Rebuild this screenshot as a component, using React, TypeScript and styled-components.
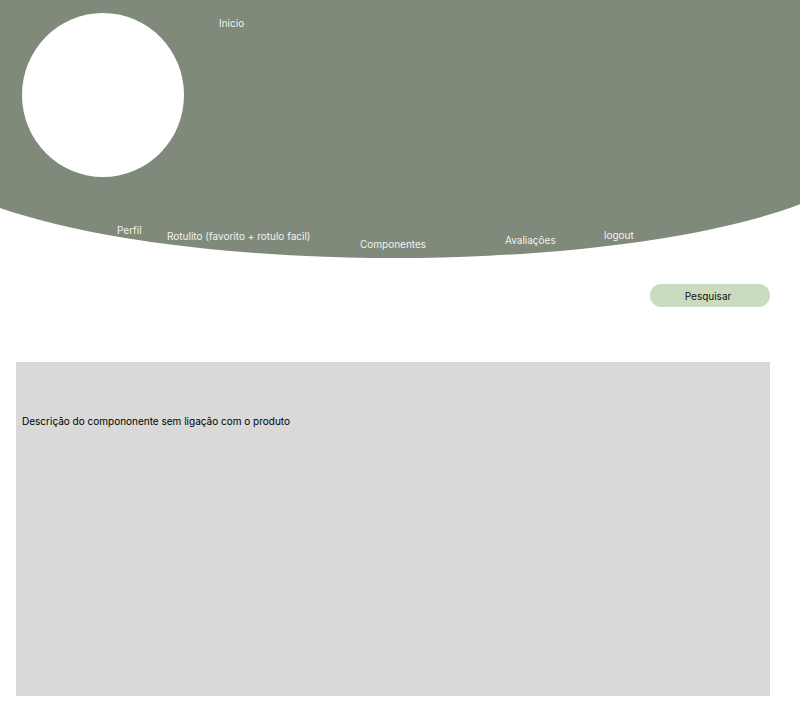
import React from "react";
import styled, { createGlobalStyle } from "styled-components";

const Global = createGlobalStyle`
  html, body {
    margin: 0;
    padding: 0;
    background: #ffffff;
    overflow-x: hidden;
  }
  body {
    font-family: Inter, "Noto Sans", "Liberation Sans", sans-serif;
  }
  * { box-sizing: border-box; }
`;

const Page = styled.div`
  width: 800px;
  min-height: 723px;
  overflow: hidden;
  display: flex;
  flex-direction: column;
`;

const Header = styled.header`
  width: 960px;
  height: 258px;
  margin-left: -85px;
  padding: 13px 0 0 107px;
  background: #7f8a7a;
  border-bottom-left-radius: 480px 116px;
  border-bottom-right-radius: 480px 116px;
  display: flex;
  flex-direction: column;
`;

const TopRow = styled.div`
  display: flex;
  align-items: flex-start;
  height: 164px;
`;

const Avatar = styled.div`
  width: 162px;
  height: 164px;
  border-radius: 50%;
  background: #ffffff;
  flex-shrink: 0;
`;

const NavText = styled.span<{ $dy?: number }>`
  display: block;
  font-size: 10px;
  line-height: 12px;
  color: #f2f2f0;
  white-space: nowrap;
  margin-top: ${(p) => p.$dy ?? 0}px;
`;

const HomeLink = styled(NavText)`
  margin-left: 35px;
`;

const NavRow = styled.nav`
  margin-top: 46px;
  margin-left: 95px;
  display: grid;
  grid-template-columns: 50px 193px 145px 99px auto;
  align-items: start;
`;

const SearchRow = styled.div`
  display: flex;
  justify-content: flex-end;
  padding: 26px 30px 0 0;
`;

const SearchButton = styled.button`
  width: 120px;
  height: 23px;
  border: none;
  border-radius: 12px;
  background: #cadbc0;
  color: #111111;
  font-family: Inter, "Noto Sans", "Liberation Sans", sans-serif;
  font-size: 10px;
  line-height: 12px;
  padding: 0 4px 0 0;
  cursor: pointer;
`;

const DescriptionBox = styled.section`
  margin: 55px 0 0 16px;
  width: 754px;
  height: 334px;
  background: #d9d9d9;
  padding: 53px 0 0 6px;
`;

const DescriptionText = styled.p`
  margin: 0;
  font-size: 10px;
  line-height: 12px;
  color: #000000;
`;

const navItems = [
  { label: "Perfil", dy: 1 },
  { label: "Rotulito (favorito + rotulo facil)", dy: 7 },
  { label: "Componentes", dy: 15 },
  { label: "Avaliações", dy: 11 },
  { label: "logout", dy: 6 },
];

export default function App() {
  return (
    <Page>
      <Global />
      <Header>
        <TopRow>
          <Avatar />
          <HomeLink $dy={4}>Inicio</HomeLink>
        </TopRow>
        <NavRow>
          {navItems.map((item) => (
            <NavText key={item.label} $dy={item.dy}>
              {item.label}
            </NavText>
          ))}
        </NavRow>
      </Header>
      <SearchRow>
        <SearchButton>Pesquisar</SearchButton>
      </SearchRow>
      <DescriptionBox>
        <DescriptionText>
          Descrição do compononente sem ligação com o produto
        </DescriptionText>
      </DescriptionBox>
    </Page>
  );
}
